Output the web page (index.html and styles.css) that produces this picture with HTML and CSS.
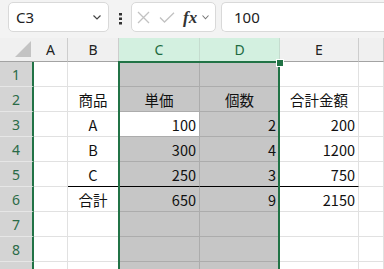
FILE: index.html
```html
<!DOCTYPE html>
<html lang="ja">
<head>
  <meta charset="UTF-8">
  <meta name="viewport" content="width=device-width, initial-scale=1.0">
  <title>Sheet1</title>
  <link rel="stylesheet" href="styles.css">
</head>
<body>
  <div class="toolbar">
    <div class="namebox">
      <span>C3</span>
      <svg class="chev" width="8" height="5" viewBox="0 0 8 5"><polyline points="0.5,0.5 4,4 7.5,0.5" fill="none" stroke="#444" stroke-width="1.2"/></svg>
    </div>
    <svg class="dots" width="3" height="12" viewBox="0 0 3 12"><rect x="0" y="0" width="3" height="2.5" fill="#333"/><rect x="0" y="4.5" width="3" height="2.5" fill="#333"/><rect x="0" y="9" width="3" height="2.5" fill="#333"/></svg>
    <div class="fbuttons">
      <svg width="13" height="13" viewBox="0 0 13 13"><path d="M1 1 L12 12 M12 1 L1 12" stroke="#c2c2c2" stroke-width="1.3"/></svg>
      <svg class="check" width="16" height="11" viewBox="0 0 16 11"><polyline points="1,5.5 5.5,10 15,0.8" fill="none" stroke="#c2c2c2" stroke-width="1.3"/></svg>
      <span class="fx">fx</span>
      <svg class="chev" width="7" height="5" viewBox="0 0 7 5"><polyline points="0.5,0.5 3.5,3.8 6.5,0.5" fill="none" stroke="#777" stroke-width="1.1"/></svg>
    </div>
    <div class="formula">100</div>
  </div>

  <div class="sheet">
    <div class="row head">
      <div class="corner"><svg width="16" height="16" viewBox="0 0 16 16"><polygon points="16,0 16,16 0,16" fill="#c3c3c3"/></svg></div>
      <div class="ch">A</div>
      <div class="ch">B</div>
      <div class="ch on">C</div>
      <div class="ch on">D</div>
      <div class="ch">E</div>
      <div class="ch"></div>
    </div>
    <div class="row">
      <div class="rh">1</div><div class="c"></div><div class="c"></div><div class="c sel"></div><div class="c sel"></div><div class="c"></div><div class="c"></div>
    </div>
    <div class="row">
      <div class="rh">2</div><div class="c"></div><div class="c mid">商品</div><div class="c sel mid">単価</div><div class="c sel mid">個数</div><div class="c mid">合計金額</div><div class="c"></div>
    </div>
    <div class="row">
      <div class="rh">3</div><div class="c"></div><div class="c mid">A</div><div class="c sel active num">100</div><div class="c sel num">2</div><div class="c num">200</div><div class="c"></div>
    </div>
    <div class="row">
      <div class="rh">4</div><div class="c"></div><div class="c mid">B</div><div class="c sel num">300</div><div class="c sel num">4</div><div class="c num">1200</div><div class="c"></div>
    </div>
    <div class="row">
      <div class="rh">5</div><div class="c"></div><div class="c mid line">C</div><div class="c sel num line">250</div><div class="c sel num line">3</div><div class="c num line">750</div><div class="c"></div>
    </div>
    <div class="row">
      <div class="rh">6</div><div class="c"></div><div class="c mid">合計</div><div class="c sel num">650</div><div class="c sel num">9</div><div class="c num">2150</div><div class="c"></div>
    </div>
    <div class="row">
      <div class="rh">7</div><div class="c"></div><div class="c"></div><div class="c sel"></div><div class="c sel"></div><div class="c"></div><div class="c"></div>
    </div>
    <div class="row">
      <div class="rh">8</div><div class="c"></div><div class="c"></div><div class="c sel"></div><div class="c sel"></div><div class="c"></div><div class="c"></div>
    </div>
    <div class="row">
      <div class="rh"></div><div class="c"></div><div class="c"></div><div class="c sel"></div><div class="c sel"></div><div class="c"></div><div class="c"></div>
    </div>

    <div class="selection"></div>
    <div class="handle"></div>
  </div>
</body>
</html>
```

FILE: styles.css
```css
body {
  margin: 0;
  padding: 0;
  background: #fff;
  font-family: "Noto Sans CJK JP", sans-serif;
  overflow: hidden;
}
.toolbar {
  height: 38px;
  background: #f3f3f3;
  display: flex;
  align-items: flex-start;
  padding: 2px 0 0 8px;
  box-sizing: border-box;
}
.namebox {
  width: 101px;
  height: 30px;
  box-sizing: border-box;
  background: #fff;
  border: 1px solid #d9d9d9;
  border-radius: 5px;
  display: flex;
  align-items: center;
  justify-content: space-between;
  padding: 0 7px 0 7px;
  font-family: "Noto Sans", sans-serif;
  font-size: 15px;
  color: #222;
}
.dots {
  margin: 11px 0 0 10px;
}
.fbuttons {
  margin-left: 9px;
  width: 85px;
  height: 30px;
  box-sizing: border-box;
  background: #fff;
  border: 1px solid #d9d9d9;
  border-radius: 5px;
  display: flex;
  align-items: center;
  padding-left: 5px;
}
.fbuttons .check {
  margin-left: 9px;
}
.fx {
  margin-left: 8px;
  font-family: "Liberation Serif", serif;
  font-style: italic;
  font-weight: bold;
  font-size: 17px;
  color: #333;
  line-height: 1;
}
.fbuttons .chev {
  margin-left: 5px;
}
.formula {
  margin-left: 5px;
  flex: 1;
  height: 30px;
  box-sizing: border-box;
  background: #fff;
  border: 1px solid #d9d9d9;
  border-right: none;
  border-radius: 5px 0 0 5px;
  padding-left: 12px;
  font-family: "Noto Sans", sans-serif;
  font-size: 15px;
  line-height: 28px;
  color: #222;
}
.sheet {
  position: relative;
}
.row {
  display: grid;
  grid-template-columns: 34px 34px 51px 81px 80px 79px 1fr;
  height: 25px;
}
.row > div {
  box-sizing: border-box;
  display: flex;
  align-items: center;
  font-size: 14.5px;
  color: #111;
}
.head {
  height: 24px;
  background: #f0f0f0;
}
.head > div {
  border-right: 1px solid #cdcdcd;
  border-bottom: 1px solid #a3a3a3;
  justify-content: center;
  font-family: "Noto Sans", sans-serif;
  font-size: 14px;
  color: #222;
}
.head .corner {
  border-right: none;
  align-items: flex-end;
  justify-content: flex-end;
  padding: 0 3px 4px 0;
}
.head .on {
  background: #d3f0e0;
  color: #1d6b40;
  border-right-color: #c5dccf;
}
.rh {
  background: #d4d4d4;
  border-right: 2px solid #217346;
  border-bottom: 1px solid #e6e6e6;
  justify-content: center;
  font-family: "Noto Sans", sans-serif;
  color: #2a6b47 !important;
  font-size: 14px !important;
}
.c {
  border-right: 1px solid #e1e1e1;
  border-bottom: 1px solid #e1e1e1;
  padding: 0 3px;
}
.c.sel {
  background: #c6c6c6;
  border-right-color: #acacac;
  border-bottom-color: #acacac;
}
.c.sel.active {
  background: #fff;
}
.c.line {
  border-bottom-color: #000;
}
.mid {
  justify-content: center;
}
.num {
  justify-content: flex-end;
}
.selection {
  position: absolute;
  left: 118px;
  top: 23px;
  width: 162px;
  height: 260px;
  border: 2px solid #217346;
  box-sizing: border-box;
}
.handle {
  position: absolute;
  left: 276px;
  top: 21px;
  width: 6px;
  height: 6px;
  background: #217346;
  border: 1px solid #fff;
}
```
